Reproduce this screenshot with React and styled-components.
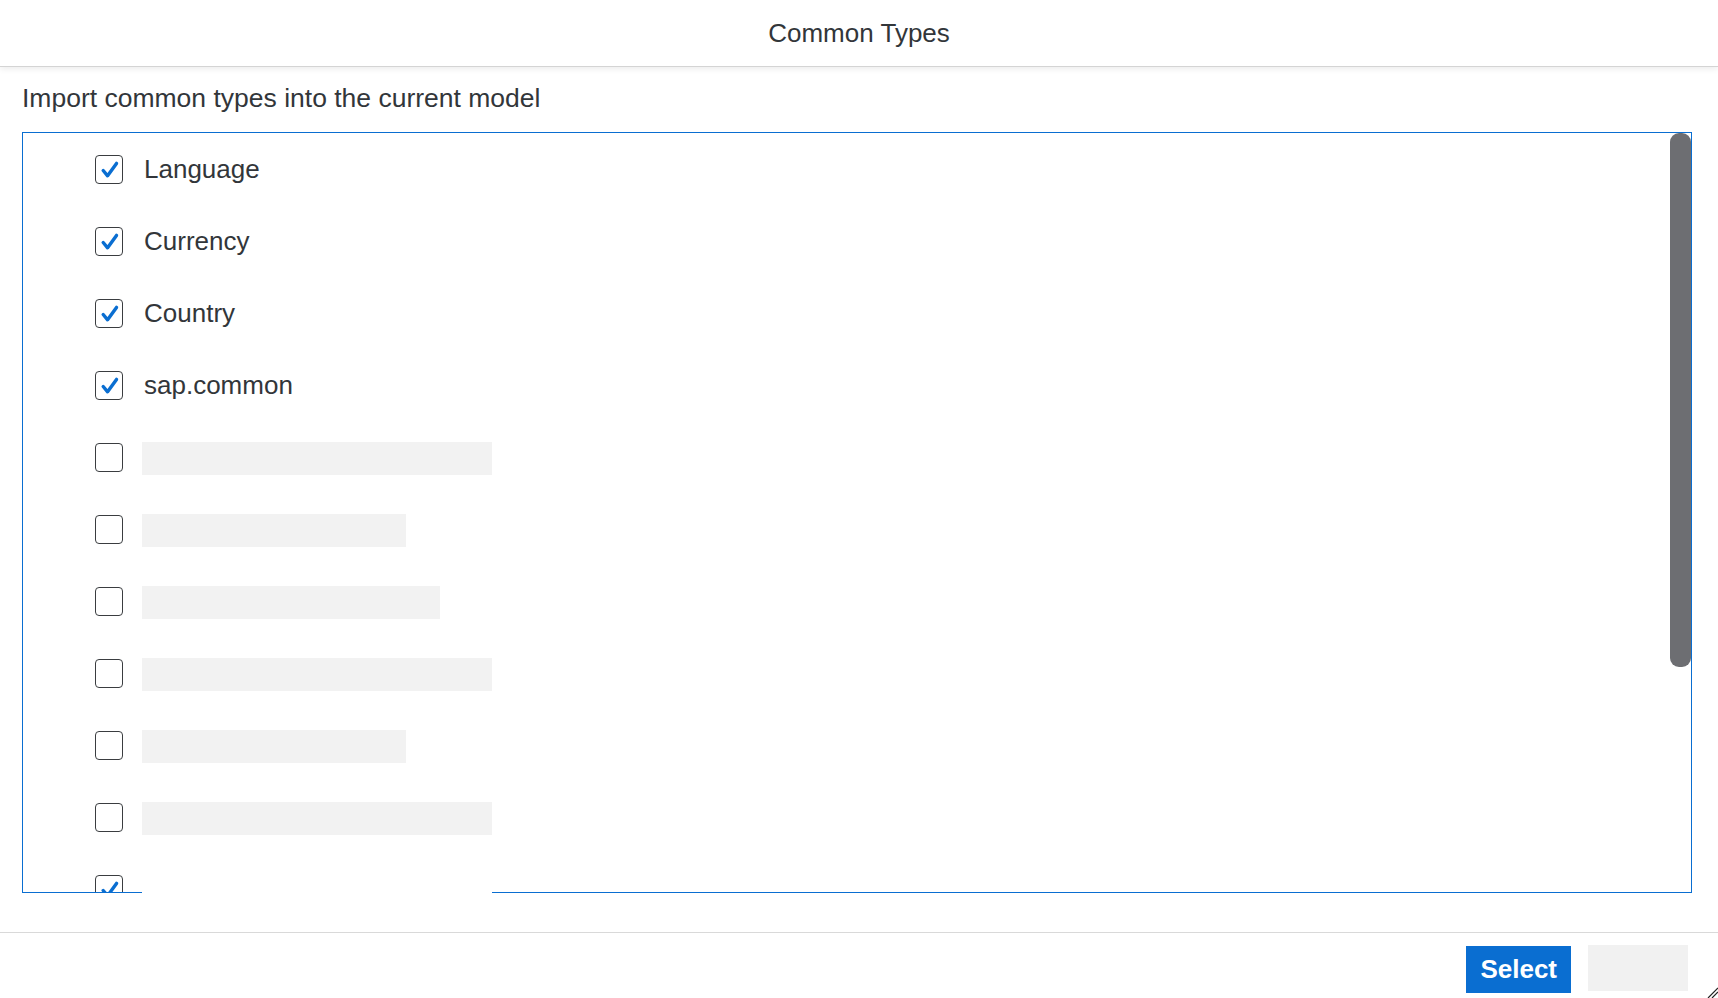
import React from "react";
import styled, { createGlobalStyle } from "styled-components";

const GlobalStyle = createGlobalStyle`
  html, body {
    margin: 0;
    padding: 0;
    background: #ffffff;
  }
  body {
    font-family: "Liberation Sans", Arial, sans-serif;
    color: #32363a;
    overflow: hidden;
  }
  *, *::before, *::after {
    box-sizing: border-box;
  }
`;

const Dialog = styled.div`
  position: relative;
  width: 1718px;
  height: 998px;
  display: flex;
  flex-direction: column;
  background: #ffffff;
`;

const Header = styled.header`
  position: relative;
  z-index: 1;
  flex: none;
  height: 67px;
  display: flex;
  align-items: center;
  justify-content: center;
  background: #ffffff;
  border-bottom: 1px solid #d4d4d4;
  box-shadow: 0 2px 6px rgba(0, 0, 0, 0.08);
`;

const Title = styled.h1`
  margin: 0;
  font-size: 26px;
  font-weight: 400;
  line-height: 30px;
  color: #32363a;
`;

const Main = styled.main`
  flex: 1;
  display: flex;
  flex-direction: column;
  gap: 19px;
  padding: 16px 26px 0 22px;
`;

const Subtitle = styled.p`
  margin: 0;
  font-size: 26.5px;
  line-height: 30px;
  color: #32363a;
`;

const ListFrame = styled.div`
  position: relative;
  flex: none;
  height: 761px;
  border: 1px solid #0a6ed1;
`;

const List = styled.ul`
  list-style: none;
  margin: 0;
  padding: 0;
  height: 100%;
  overflow-y: auto;
  overflow-x: hidden;
  scrollbar-width: none;

  &::-webkit-scrollbar {
    display: none;
  }
`;

const ScrollThumb = styled.div`
  position: absolute;
  top: 0;
  right: 0;
  width: 21px;
  height: 534px;
  border-radius: 9px;
  background: #6d6e72;
`;

const Row = styled.li`
  height: 72px;
  display: flex;
  align-items: center;
  gap: 19px;
  padding-left: 72px;
`;

const Box = styled.span`
  flex: none;
  width: 28px;
  height: 29px;
  border: 1px solid #3a3d40;
  border-radius: 4px;
  display: flex;
  align-items: center;
  justify-content: center;
  background: #ffffff;
`;

const Label = styled.span`
  margin-left: 2px;
  font-size: 26px;
  line-height: 30px;
  color: #32363a;
`;

const Placeholder = styled.span`
  flex: none;
  height: 33px;
  margin-top: 3px;
  background: #f2f2f2;
`;

const Mask = styled.div`
  position: absolute;
  left: 119px;
  top: 742px;
  width: 350px;
  height: 33px;
  background: #ffffff;
`;

const Footer = styled.footer`
  flex: none;
  height: 66px;
  border-top: 1px solid #d9d9d9;
  display: flex;
  justify-content: flex-end;
  align-items: flex-start;
  gap: 17px;
  padding: 12px 30px 0 0;
`;

const PrimaryButton = styled.button`
  margin-top: 1px;
  height: 47px;
  padding: 0 14px;
  border: none;
  border-radius: 0;
  background: #0a6ed1;
  color: #ffffff;
  font-family: "Liberation Sans", Arial, sans-serif;
  font-size: 26px;
  font-weight: 700;
  line-height: 47px;
  cursor: pointer;
`;

const GhostButton = styled.div`
  width: 100px;
  height: 46px;
  background: #f1f1f1;
`;

const Grip = styled.svg`
  position: absolute;
  right: 0;
  bottom: 0;
`;

const Check = () => (
  <svg width="26" height="27" viewBox="0 0 26 27">
    <path
      d="M7.2 14.5 L11.6 19.8 L20.5 7.4"
      fill="none"
      stroke="#0a6ed1"
      strokeWidth="3.4"
      strokeLinecap="round"
      strokeLinejoin="round"
    />
  </svg>
);

const rows = [
  { label: "Language", checked: true },
  { label: "Currency", checked: true },
  { label: "Country", checked: true },
  { label: "sap.common", checked: true },
  { bar: 350 },
  { bar: 264 },
  { bar: 298 },
  { bar: 350 },
  { bar: 264 },
  { bar: 350 },
  { checked: true, bar: 0 },
  { bar: 298 },
  { bar: 264 },
  { bar: 350 },
  { bar: 298 },
];

export default function App() {
  return (
    <>
      <GlobalStyle />
      <Dialog>
        <Header>
          <Title>Common Types</Title>
        </Header>
        <Main>
          <Subtitle>Import common types into the current model</Subtitle>
          <ListFrame>
            <List>
              {rows.map((r, i) => (
                <Row key={i}>
                  <Box>{r.checked && <Check />}</Box>
                  {r.label ? (
                    <Label>{r.label}</Label>
                  ) : r.bar ? (
                    <Placeholder style={{ width: r.bar }} />
                  ) : null}
                </Row>
              ))}
            </List>
            <ScrollThumb />
            <Mask />
          </ListFrame>
        </Main>
        <Footer>
          <PrimaryButton>Select</PrimaryButton>
          <GhostButton />
        </Footer>
        <Grip width="12" height="12" viewBox="0 0 12 12">
          <path d="M2 12 L12 2 M6 12 L12 6" stroke="#222" strokeWidth="1.2" />
        </Grip>
      </Dialog>
    </>
  );
}
